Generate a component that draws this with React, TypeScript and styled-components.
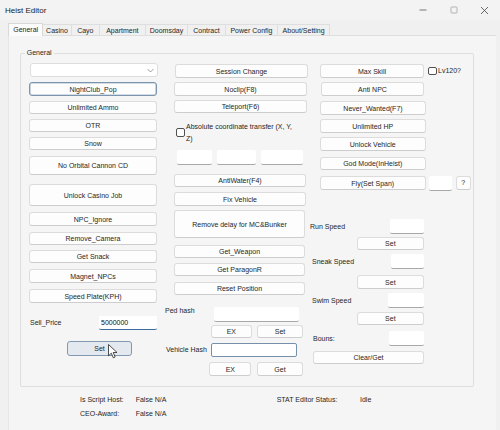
import styled, { createGlobalStyle, css } from "styled-components";

const GlobalStyle = createGlobalStyle`
  html, body {
    margin: 0;
    padding: 0;
    background: #f0f0f0;
  }
  body {
    font-family: "Liberation Sans", Arial, sans-serif;
    font-size: 7px;
    color: #262626;
  }
  * {
    box-sizing: border-box;
  }
`;

const tabs = [
  { name: "General", w: 35.3 },
  { name: "Casino", w: 28.4 },
  { name: "Cayo", w: 28.3 },
  { name: "Apartment", w: 45.7 },
  { name: "Doomsday", w: 42.6 },
  { name: "Contract", w: 37.4 },
  { name: "Power Config", w: 52.6 },
  { name: "About/Setting", w: 51.7 },
];

const App = () => {
  return (
    <>
      <GlobalStyle />
      <Window>
        <TitleBar>
          <Title>Heist Editor</Title>
          <WinControls>
            <WinButton>
              <svg width="8" height="8" viewBox="0 0 8 8">
                <path d="M0.5 4h7" stroke="#555" strokeWidth="0.8" />
              </svg>
            </WinButton>
            <WinButton>
              <svg width="8" height="8" viewBox="0 0 8 8">
                <rect x="1" y="1" width="6" height="6" rx="0.8" fill="none" stroke="#9a9a9a" strokeWidth="0.7" />
              </svg>
            </WinButton>
            <WinButton>
              <svg width="9" height="9" viewBox="0 0 9 9">
                <path d="M1 1l7 7M8 1l-7 7" stroke="#444" strokeWidth="0.8" />
              </svg>
            </WinButton>
          </WinControls>
        </TitleBar>

        <TabStrip>
          {tabs.map((t, i) => (
            <Tab key={t.name} $w={t.w} $active={i === 0}>
              {t.name}
            </Tab>
          ))}
        </TabStrip>

        <TabPage>
          <GroupBox>
            <GroupTitle>General</GroupTitle>
            <Columns>
              {/* left column */}
              <Column $w={130} $ml={8}>
                <Combo $ml={1} $w={128}>
                  <svg width="7" height="5" viewBox="0 0 7 5">
                    <path d="M0.5 1l3 3 3-3" fill="none" stroke="#777" strokeWidth="0.7" />
                  </svg>
                </Combo>
                <Btn $mt={5} $w={128} $state="focus">NightClub_Pop</Btn>
                <Btn $mt={5} $h={13} $w={128}>Unlimited Ammo</Btn>
                <Btn $mt={5} $h={13} $w={128}>OTR</Btn>
                <Btn $mt={5} $h={13} $w={128}>Snow</Btn>
                <Btn $mt={6} $h={19} $w={128}>No Orbital Cannon CD</Btn>
                <Btn $mt={9} $h={22} $w={128}>Unlock Casino Job</Btn>
                <Btn $mt={6} $w={128}>NPC_Ignore</Btn>
                <Btn $mt={6} $h={13} $w={128}>Remove_Camera</Btn>
                <Btn $mt={5} $h={13} $w={128}>Get Snack</Btn>
                <Btn $mt={6} $w={128}>Magnet_NPCs</Btn>
                <Btn $mt={6} $w={128}>Speed Plate(KPH)</Btn>
                <FieldRow $mt={13} $h={14} $w={128}>
                  <Label $ml={1}>Sell_Price</Label>
                  <Field $w={58} $h={14} $variant="active" defaultValue="5000000" readOnly />
                </FieldRow>
                <Btn $mt={11} $h={15} $ml={38} $w={65} $state="hover">
                  Set
                  <Pointer width="10" height="15" viewBox="0 0 10 15">
                    <path
                      d="M0.5 0.5v11.3l2.8-2.6 2 4.6 1.9-0.8-2-4.5h3.8z"
                      fill="#fff"
                      stroke="#222"
                      strokeWidth="0.8"
                      strokeLinejoin="round"
                    />
                  </Pointer>
                </Btn>
              </Column>

              {/* middle column */}
              <Column $w={145} $ml={6}>
                <Btn $mt={1} $ml={10} $w={133}>Session Change</Btn>
                <Btn $mt={4} $ml={9} $w={133}>Noclip(F8)</Btn>
                <Btn $mt={4} $h={13} $ml={9} $w={133}>Teleport(F6)</Btn>
                <CheckRow $mt={8} $ml={11}>
                  <CheckBox $top={7} />
                  <CheckText>
                    Absolute coordinate transfer (X, Y,
                    <br />
                    Z)
                  </CheckText>
                </CheckRow>
                <FieldRow $mt={6} $h={15}>
                  <Field $ml={12} $w={35} $h={15} />
                  <Field $ml={4.7} $w={39.3} $h={15} />
                  <Field $ml={5.3} $w={41.4} $h={15} />
                </FieldRow>
                <Btn $mt={9} $h={13} $ml={9} $w={132}>AntiWater(F4)</Btn>
                <Btn $mt={5} $ml={9} $w={132}>Fix Vehicle</Btn>
                <Btn $mt={4} $h={28} $ml={9} $w={131}>Remove delay for MC&amp;Bunker</Btn>
                <Btn $mt={7} $h={13} $ml={9} $w={131}>Get_Weapon</Btn>
                <Btn $mt={5} $h={13} $ml={9} $w={131}>Get ParagonR</Btn>
                <Btn $mt={6} $h={13} $ml={9} $w={131}>Reset Position</Btn>
                <FieldRow $mt={12} $h={15} $w={134} $top>
                  <Label>Ped hash</Label>
                  <Field $w={85} $h={15} />
                </FieldRow>
                <FieldRow $mt={3} $h={13}>
                  <Btn $ml={45.7} $w={41.3} $h={13}>EX</Btn>
                  <Btn $ml={5.3} $w={45.4} $h={13}>Set</Btn>
                </FieldRow>
                <FieldRow $mt={5} $h={14} $w={132}>
                  <Label $ml={1}>Vehicle Hash</Label>
                  <Field $w={86} $h={14} $variant="outlined" />
                </FieldRow>
                <FieldRow $mt={5} $h={14}>
                  <Btn $ml={44.3} $w={42} $h={14}>EX</Btn>
                  <Btn $ml={6} $w={45.4} $h={14}>Get</Btn>
                </FieldRow>
              </Column>

              {/* right column */}
              <Column $w={163}>
                <FieldRow $mt={1} $h={14}>
                  <Btn $ml={10} $w={104} $h={14}>Max Skill</Btn>
                  <CheckBox $ml={4} />
                  <Label $ml={1.5}>Lv120?</Label>
                </FieldRow>
                <Btn $mt={4} $ml={11} $w={103}>Anti NPC</Btn>
                <Btn $mt={5} $ml={10} $w={106}>Never_Wanted(F7)</Btn>
                <Btn $mt={4} $ml={10} $w={105.5}>Unlimited HP</Btn>
                <Btn $mt={4} $ml={10} $w={105.5}>Unlock Vehicle</Btn>
                <Btn $mt={6} $h={13} $ml={10} $w={105.5}>God Mode(InHeist)</Btn>
                <FieldRow $mt={6} $h={15} $start>
                  <Btn $ml={10} $w={105.5} $h={14}>Fly(Set Span)</Btn>
                  <Field $ml={3.5} $w={22.5} $h={15} />
                  <Btn $ml={4} $w={15.6} $h={13.5}>?</Btn>
                </FieldRow>
                <FieldRow $mt={28} $h={15} $w={114}>
                  <Label>Run Speed</Label>
                  <Field $w={34} $h={15} />
                </FieldRow>
                <Btn $mt={3} $h={13} $ml={46.7} $w={67.3}>Set</Btn>
                <FieldRow $mt={4} $h={15} $w={114}>
                  <Label $ml={2}>Sneak Speed</Label>
                  <Field $w={33} $h={15} />
                </FieldRow>
                <Btn $mt={6} $ml={46.7} $w={67.3}>Set</Btn>
                <FieldRow $mt={4} $h={15} $w={114}>
                  <Label $ml={2}>Swim Speed</Label>
                  <Field $w={36} $h={15} />
                </FieldRow>
                <Btn $mt={4} $h={13} $ml={46.7} $w={67.3}>Set</Btn>
                <FieldRow $mt={6} $h={15} $w={114}>
                  <Label $ml={3}>Bouns:</Label>
                  <Field $w={35} $h={15} />
                </FieldRow>
                <Btn $mt={5} $h={13} $ml={3} $w={111}>Clear/Get</Btn>
              </Column>
            </Columns>
          </GroupBox>

          <StatusGrid>
            <span>Is Script Host:</span>
            <span>False N/A</span>
            <span>STAT Editor Status:</span>
            <span>Idle</span>
            <span>CEO-Award:</span>
            <span>False N/A</span>
          </StatusGrid>
        </TabPage>
      </Window>
    </>
  );
};

const Window = styled.div`
  width: 500px;
  height: 430px;
  overflow: hidden;
  background: #f0f0f0;
  display: flex;
  flex-direction: column;
`;

const TitleBar = styled.div`
  height: 20px;
  display: flex;
  align-items: center;
  padding-left: 5px;
  background: #f3f3f3;
`;

const Title = styled.div`
  font-size: 8px;
  color: #1a1a1a;
`;

const WinControls = styled.div`
  margin-left: auto;
  display: flex;
  height: 100%;
`;

const WinButton = styled.div`
  width: 31px;
  height: 100%;
  display: flex;
  align-items: center;
  justify-content: center;
`;

const TabStrip = styled.div`
  height: 15px;
  padding-left: 8px;
  display: flex;
  align-items: flex-end;
  position: relative;
  z-index: 1;
`;

const Tab = styled.div<{ $w: number; $active?: boolean }>`
  width: ${(p) => p.$w}px;
  height: 10.7px;
  display: flex;
  align-items: center;
  justify-content: center;
  white-space: nowrap;
  border: 1px solid #dedede;
  border-left: none;
  border-bottom: none;
  background: #f0f0f0;
  ${(p) =>
    p.$active &&
    css`
      height: 13.3px;
      margin-bottom: -1px;
      padding-bottom: 1px;
      background: #fbfbfb;
      border-left: 1px solid #d8d8d8;
      border-color: #d8d8d8;
    `}
`;

const TabPage = styled.div`
  margin-left: 8px;
  width: 488px;
  flex: 1;
  padding-top: 12px;
  background: #f5f5f5;
  border-top: 1px solid #dedede;
  border-left: 1px solid #e6e6e6;
`;

const GroupBox = styled.fieldset`
  margin: 0 0 0 11px;
  padding: 5px 0 0 0;
  min-width: 0;
  width: 454px;
  height: 339px;
  border: 1px solid #dedede;
  border-radius: 2px;
`;

const GroupTitle = styled.legend`
  margin-left: 3.7px;
  padding: 0 2px;
  line-height: 10px;
  font-size: 7px;
`;

const Columns = styled.div`
  display: flex;
  align-items: flex-start;
`;

const Column = styled.div<{ $w: number; $ml?: number }>`
  width: ${(p) => p.$w}px;
  margin-left: ${(p) => p.$ml ?? 0}px;
  display: flex;
  flex-direction: column;
  align-items: flex-start;
`;

const Btn = styled.button<{
  $h?: number;
  $mt?: number;
  $ml?: number;
  $w?: number;
  $state?: "focus" | "hover";
}>`
  position: relative;
  flex: none;
  display: flex;
  align-items: center;
  justify-content: center;
  height: ${(p) => p.$h ?? 14}px;
  width: ${(p) => p.$w ?? 100}px;
  margin: ${(p) => p.$mt ?? 0}px 0 0 ${(p) => p.$ml ?? 0}px;
  padding: 0;
  font: inherit;
  color: #262626;
  line-height: 1;
  background: #fdfdfd;
  border: 1px solid #dcdcdc;
  border-bottom-color: #cdcdcd;
  border-radius: 3px;
  ${(p) =>
    p.$state === "focus" &&
    css`
      border-color: #7b95ae;
      box-shadow: inset 0 0 0 0.6px #a9bccd;
    `}
  ${(p) =>
    p.$state === "hover" &&
    css`
      background: #e3e9ef;
      border-color: #8298b0;
    `}
`;

const Pointer = styled.svg`
  position: absolute;
  left: 40px;
  top: 2px;
`;

const Combo = styled.div<{ $ml?: number; $w: number }>`
  height: 14px;
  width: ${(p) => p.$w}px;
  margin-left: ${(p) => p.$ml ?? 0}px;
  display: flex;
  align-items: center;
  justify-content: flex-end;
  padding-right: 3px;
  background: #fff;
  border: 1px solid #dedede;
  border-radius: 3px;
`;

const FieldRow = styled.div<{
  $mt?: number;
  $h: number;
  $w?: number;
  $top?: boolean;
  $start?: boolean;
}>`
  display: flex;
  align-items: ${(p) => (p.$top || p.$start ? "flex-start" : "center")};
  justify-content: ${(p) => (p.$w ? "space-between" : "flex-start")};
  margin-top: ${(p) => p.$mt ?? 0}px;
  height: ${(p) => p.$h}px;
  width: ${(p) => (p.$w ? `${p.$w}px` : "auto")};
`;

const Label = styled.span<{ $ml?: number }>`
  margin-left: ${(p) => p.$ml ?? 0}px;
  white-space: nowrap;
  line-height: 8px;
`;

const Field = styled.input<{
  $w: number;
  $h: number;
  $ml?: number;
  $variant?: "active" | "outlined";
}>`
  flex: none;
  width: ${(p) => p.$w}px;
  height: ${(p) => p.$h}px;
  margin: 0 0 0 ${(p) => p.$ml ?? 0}px;
  padding: 0 2px;
  font: inherit;
  color: #111;
  background: #fff;
  border: none;
  border-bottom: 1px solid #a8a8a8;
  border-radius: 2px;
  outline: none;
  ${(p) =>
    p.$variant === "active" &&
    css`
      border-bottom: 1.5px solid #3d6d9e;
    `}
  ${(p) =>
    p.$variant === "outlined" &&
    css`
      border: 1px solid #7590ab;
    `}
`;

const CheckRow = styled.div<{ $mt: number; $ml: number }>`
  display: flex;
  align-items: flex-start;
  margin: ${(p) => p.$mt}px 0 0 ${(p) => p.$ml}px;
`;

const CheckBox = styled.span<{ $top?: number; $ml?: number }>`
  flex: none;
  width: 8.5px;
  height: 8.5px;
  margin: ${(p) => p.$top ?? 0}px 0 0 ${(p) => p.$ml ?? 0}px;
  background: #fff;
  border: 0.8px solid #505050;
  border-radius: 2px;
`;

const CheckText = styled.div`
  margin-left: 1.5px;
  line-height: 11.6px;
  white-space: nowrap;
`;

const StatusGrid = styled.div`
  display: grid;
  grid-template-columns: 55.7px 141px 83.3px auto;
  grid-auto-rows: 14.3px;
  align-items: center;
  margin: 5px 0 0 71px;
`;

export default App;
